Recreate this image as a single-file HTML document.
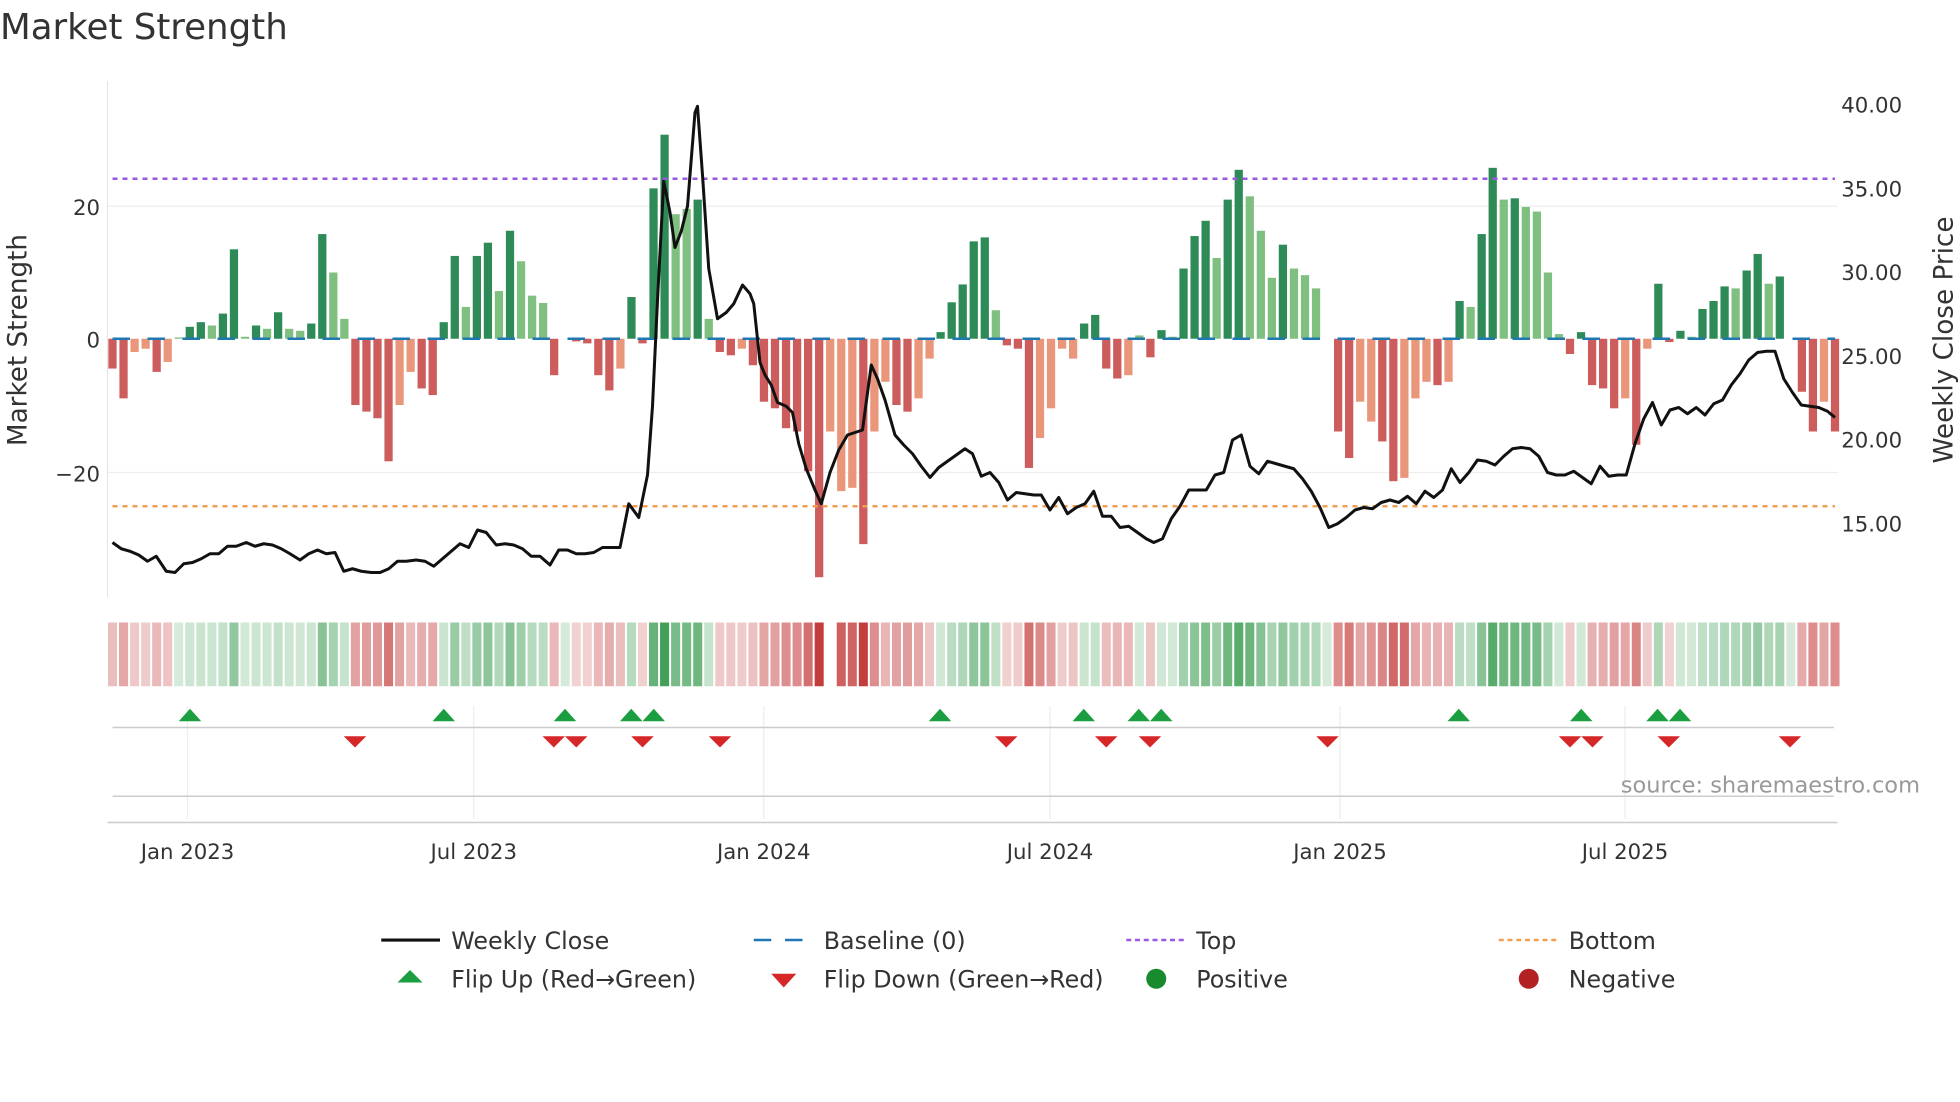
<!DOCTYPE html>
<html><head><meta charset="utf-8"><style>
html,body{margin:0;padding:0;background:#fff;}
svg{display:block;font-family:"DejaVu Sans","Liberation Sans",sans-serif;}
</style></head><body>
<svg id="s" width="1960" height="1102" viewBox="0 0 1568 881.6" xmlns="http://www.w3.org/2000/svg">
<text x="0" y="31" font-size="28.5" fill="#333">Market Strength</text>
<line x1="86" y1="165" x2="1470" y2="165" stroke="#eee" stroke-width="1"/>
<line x1="86" y1="378" x2="1470" y2="378" stroke="#eee" stroke-width="1"/>
<line x1="86" y1="65" x2="86" y2="478" stroke="#e6e6e6" stroke-width="1"/>
<g font-size="17" fill="#333" text-anchor="end">
<text x="80" y="172">20</text><text x="80" y="278">0</text><text x="80" y="385">−20</text></g>
<g font-size="17" fill="#333">
<text x="1473" y="90">40.00</text><text x="1473" y="157">35.00</text><text x="1473" y="224">30.00</text>
<text x="1473" y="291">25.00</text><text x="1473" y="358">20.00</text><text x="1473" y="425">15.00</text></g>
<text transform="translate(21,272) rotate(-90)" font-size="21" fill="#333" text-anchor="middle">Market Strength</text>
<text transform="translate(1562,272) rotate(-90)" font-size="21" fill="#333" text-anchor="middle">Weekly Close Price</text>
<g id="bars"></g>
<line x1="90" y1="271" x2="1468" y2="271" stroke="#1f77b4" stroke-width="2" stroke-dasharray="14,14"/>
<line x1="90" y1="143" x2="1468" y2="143" stroke="#9b59e0" stroke-width="2" stroke-dasharray="4,4"/>
<line x1="90" y1="405" x2="1468" y2="405" stroke="#f0a050" stroke-width="2" stroke-dasharray="4,4"/>
<polyline id="price" fill="none" stroke="#111" stroke-width="2.4" stroke-linejoin="round"/>
<g id="heat"></g>
<g stroke="#eee" stroke-width="1">
<line x1="150" y1="565" x2="150" y2="655"/><line x1="379" y1="565" x2="379" y2="655"/><line x1="611" y1="565" x2="611" y2="655"/>
<line x1="840" y1="565" x2="840" y2="655"/><line x1="1072" y1="565" x2="1072" y2="655"/><line x1="1300" y1="565" x2="1300" y2="655"/></g>
<line x1="90" y1="582" x2="1467" y2="582" stroke="#ccc" stroke-width="1.2"/>
<line x1="90" y1="637" x2="1467" y2="637" stroke="#ccc" stroke-width="1.2"/>
<line x1="86" y1="658" x2="1470" y2="658" stroke="#ccc" stroke-width="1.2"/>
<g id="marks"></g>
<text x="1536" y="634" font-size="18" fill="#999" text-anchor="end">source: sharemaestro.com</text>
<g font-size="17" fill="#333" text-anchor="middle">
<text x="150" y="687">Jan 2023</text><text x="379" y="687">Jul 2023</text><text x="611" y="687">Jan 2024</text>
<text x="840" y="687">Jul 2024</text><text x="1072" y="687">Jan 2025</text><text x="1300" y="687">Jul 2025</text></g>
<g font-size="19" fill="#333">
<line x1="305" y1="752" x2="352" y2="752" stroke="#111" stroke-width="2.5"/><text x="361" y="759">Weekly Close</text>
<line x1="603" y1="752" x2="650" y2="752" stroke="#1f77b4" stroke-width="2" stroke-dasharray="14,11"/><text x="659" y="759">Baseline (0)</text>
<line x1="901" y1="752" x2="948" y2="752" stroke="#9b59e0" stroke-width="2" stroke-dasharray="4,3"/><text x="957" y="759">Top</text>
<line x1="1199" y1="752" x2="1246" y2="752" stroke="#f0a050" stroke-width="2" stroke-dasharray="4,3"/><text x="1255" y="759">Bottom</text>
<polygon points="328,776 338,786 318,786" fill="#1a9e3f"/><text x="361" y="790">Flip Up (Red→Green)</text>
<polygon points="617,779 637,779 627,790" fill="#d62728"/><text x="659" y="790">Flip Down (Green→Red)</text>
<circle cx="925" cy="783" r="8" fill="#1a8a2e"/><text x="957" y="790">Positive</text>
<circle cx="1223" cy="783" r="8" fill="#b22222"/><text x="1255" y="790">Negative</text>
</g>
</svg>
<script>
var NS="http://www.w3.org/2000/svg";
function el(t,a,p){var e=document.createElementNS(NS,t);for(var k in a)e.setAttribute(k,a[k]);document.getElementById(p).appendChild(e);return e;}
var D="-4.5 dr,-9 dr,-2 lr,-1.5 lr,-5 dr,-3.5 lr,0.2 lg,1.8 dg,2.5 dg,2 lg,3.8 dg,13.5 dg,0.3 lg,2 dg,1.5 lg,4 dg,1.5 lg,1.2 lg,2.3 dg,15.8 dg,10 lg,3 lg,-10 dr,-11 dr,-12 dr,-18.5 dr,-10 lr,-5 lr,-7.5 dr,-8.5 dr,2.5 dg,12.5 dg,4.8 lg,12.5 dg,14.5 dg,7.2 lg,16.3 dg,11.7 lg,6.5 lg,5.4 lg,-5.5 dr,0 lg,-0.4 dr,-0.7 dr,-5.5 dr,-7.8 dr,-4.5 lr,6.3 dg,-0.7 dr,22.7 dg,30.8 dg,18.8 lg,19.6 lg,21 dg,3 lg,-2 dr,-2.5 dr,-1.5 lr,-4 dr,-9.5 dr,-10.5 dr,-13.5 dr,-14 dr,-20 dr,-36 dr,-14 lr,-23 lr,-22.5 lr,-31 dr,-14 lr,-6.5 lr,-10 dr,-11 dr,-9 lr,-3 lr,1 dg,5.5 dg,8.2 dg,14.7 dg,15.3 dg,4.3 lg,-1 dr,-1.5 dr,-19.5 dr,-15 lr,-10.5 lr,-1.5 lr,-3 lr,2.3 dg,3.6 dg,-4.5 dr,-6 dr,-5.5 lr,0.5 lg,-2.8 dr,1.3 dg,0.3 lg,10.6 dg,15.5 dg,17.8 dg,12.2 lg,21 dg,25.5 dg,21.5 lg,16.3 lg,9.2 lg,14.2 dg,10.6 lg,9.6 lg,7.6 lg,0 lg,-14 dr,-18 dr,-9.5 lr,-12.5 lr,-15.5 dr,-21.5 dr,-21 lr,-9 lr,-6.5 lr,-7 dr,-6.5 lr,5.7 dg,4.8 lg,15.8 dg,25.8 dg,21 lg,21.2 dg,19.9 lg,19.2 lg,10 lg,0.7 lg,-2.3 dr,1 dg,-7 dr,-7.5 dr,-10.5 dr,-9 lr,-16 dr,-1.5 lr,8.3 dg,-0.5 dr,1.2 dg,0.3 lg,4.5 dg,5.7 dg,7.9 dg,7.6 lg,10.3 dg,12.8 dg,8.3 lg,9.4 dg,0 lg,-8 dr,-14 dr,-9.5 lr,-14 dr".split(",");
var C={dg:"#2e8b57",lg:"#7fbf7f",dr:"#cd5c5c",lr:"#e9967a"};
var n=D.length,step=(1468-90)/(n-1);
D.forEach(function(s,i){var p=s.split(" "),v=+p[0],x=90+i*step;
 var h=Math.abs(v)*5.3,y=v>=0?271-h:271;
 if(h>0.1)el("rect",{x:x-3.3,y:y,width:6.6,height:h,fill:C[p[1]]},"bars");
 var t=Math.min(Math.abs(v)/30,1),col;
 if(v>=0){var a=0.2+0.7*t;col="rgba(46,150,70,"+a.toFixed(2)+")";}
 else{var a=0.2+0.7*t;col="rgba(190,40,40,"+a.toFixed(2)+")";}
 if(i==65)col="#fff";
 el("rect",{x:x-step/2+0.8,y:498,width:step-1.6,height:51,fill:col},"heat");
});
var P="90,434 97,439 104,441 111,444 118,449 125,445 133,457 140,458 147,451 154,450 161,447 168,443 175,443 182,437 189,437 197,434 204,437 211,435 218,436 225,439 232,443 240,448 247,443 254,440 261,443 268,442 275,457 282,455 289,457 297,458 304,458 311,455 318,449 325,449 333,448 340,449 347,453 354,447 361,441 368,435 375,438 382,424 389,426 397,436 404,435 411,436 418,439 425,445 432,445 440,452 447,440 454,440 461,443 468,443 475,442 482,438 489,438 496,438 503,403 511,414 518,380 522,325 526,240 531,145 536,170 540,198 545,185 550,165 556,90 558,85 562,140 567,215 574,255 581,250 587,243 594,228 600,235 603,243 608,290 612,300 617,308 622,322 629,325 634,330 639,355 645,375 652,392 657,403 664,378 671,360 678,348 684,346 690,344 697,292 702,303 708,320 716,348 723,356 730,363 737,373 744,382 751,374 758,369 765,364 772,359 778,363 785,381 792,378 799,386 806,400 813,394 820,395 827,396 833,396 840,408 847,398 854,411 861,406 868,403 875,393 882,413 889,413 896,422 903,421 910,426 917,431 923,434 930,431 937,415 944,405 951,392 958,392 965,392 972,380 979,378 986,352 993,348 1000,373 1007,379 1014,369 1021,371 1028,373 1035,375 1042,383 1049,393 1056,406 1063,422 1070,419 1077,414 1084,408 1091,406 1098,407 1105,402 1112,400 1119,402 1126,397 1133,403 1140,393 1147,398 1154,392 1161,375 1168,386 1175,378 1182,368 1189,369 1196,372 1203,365 1210,359 1217,358 1224,359 1231,365 1238,378 1245,380 1252,380 1259,377 1266,382 1273,387 1280,373 1287,381 1294,380 1301,380 1308,355 1315,335 1322,322 1329,340 1336,328 1343,326 1350,331 1357,326 1364,332 1371,323 1378,320 1385,308 1392,299 1399,288 1406,282 1413,281 1420,281 1427,303 1434,314 1441,324 1448,325 1455,326 1462,329 1468,334";
document.getElementById("price").setAttribute("points",P);
[152,355,452,505,523,752,867,911,929,1167,1265,1326,1344].forEach(function(x){el("polygon",{points:(x)+",567 "+(x+9)+",577 "+(x-9)+",577",fill:"#1a9e3f"},"marks");});
[284,443,461,514,576,805,885,920,1062,1256,1274,1335,1432].forEach(function(x){el("polygon",{points:(x-9)+",589 "+(x+9)+",589 "+x+",598",fill:"#d62728"},"marks");});
</script>
</body></html>
